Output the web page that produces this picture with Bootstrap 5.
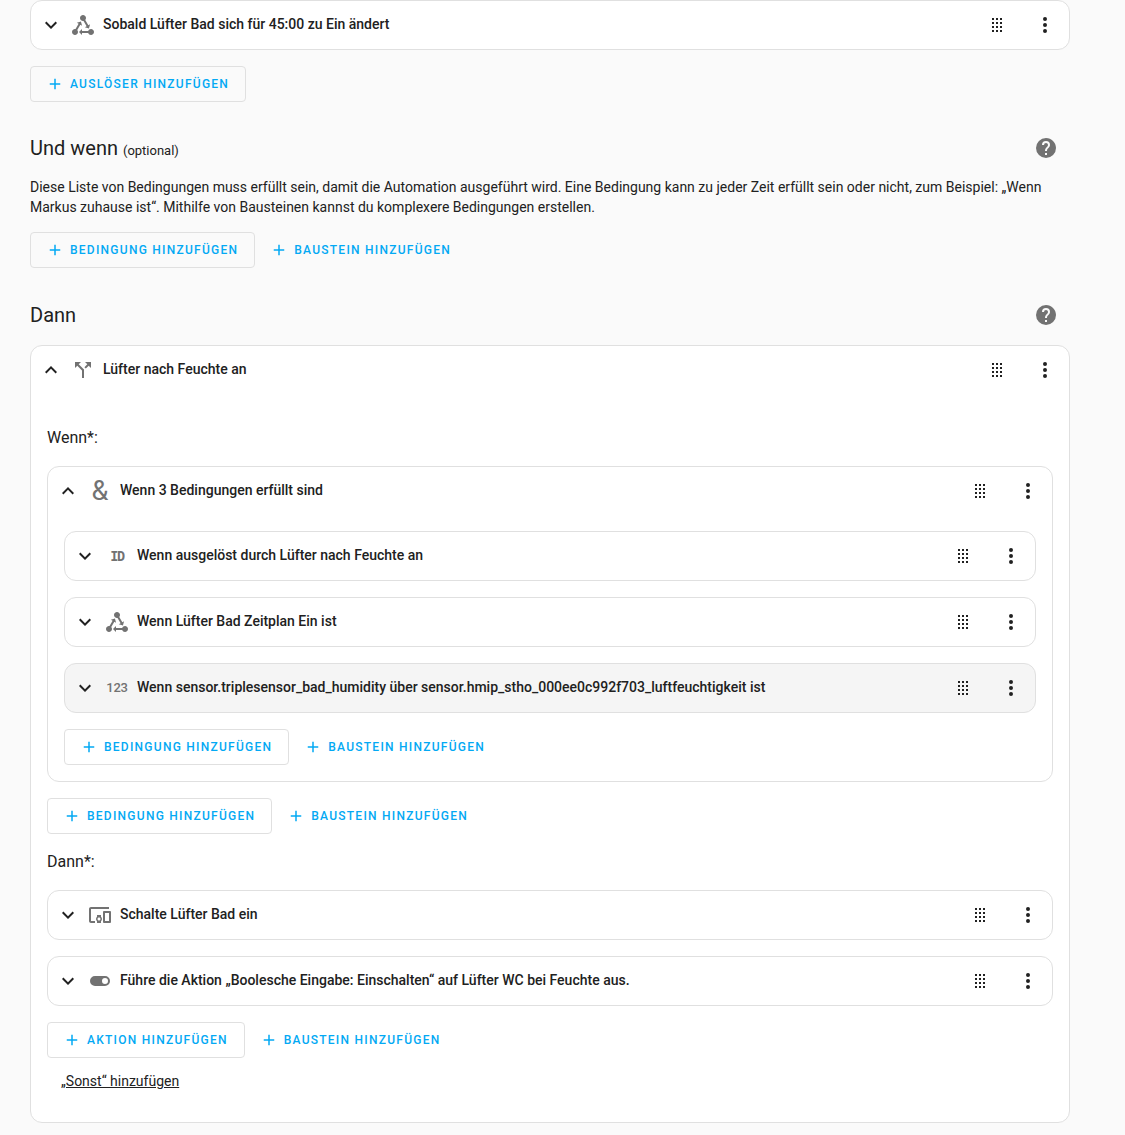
<!DOCTYPE html>
<html lang="de">
<head>
    <meta charset="UTF-8">
    <title>Automation</title>
    <link href="https://cdn.jsdelivr.net/npm/bootstrap@5.3.0/dist/css/bootstrap.min.css" rel="stylesheet">
    <style>
        body { background: #fafafa; color: #212121; font-family: Roboto, "Liberation Sans", sans-serif; font-size: 14px; line-height: 20px; }
        .page-wrap { width: 1040px; margin-left: 30px; padding-bottom: 12px; }
        svg { display: block; fill: currentColor; flex: none; }
        .sprite { display: none; }
        .row-card { background: #fff; border: 1px solid #e0e0e0; border-radius: 12px; }
        .row-card.hilite { background: #f5f5f5; }
        .row-head { height: 48px; padding: 0 12px 0 8px; }
        .row-title { font-weight: 500; padding-bottom: 3px; margin-left: 8px; }
        .row-icon { color: #727272; width: 24px; height: 24px; margin-left: 8px; display: flex; align-items: center; justify-content: center; }
        .glyph-amp { font-size: 27px; font-weight: 400; line-height: 24px; }
        .glyph-id { font-family: "DejaVu Sans Mono", monospace; font-size: 13.5px; font-weight: 700; letter-spacing: -1.4px; }
        .glyph-num { font-size: 13px; font-weight: 500; letter-spacing: -.2px; }
        .row-drag { margin-right: 24px; }
        .row-body { padding: 16px; }
        .add-btn { display: inline-flex; align-items: center; height: 36px; padding: 0 16px 0 15px; border: 1px solid transparent; border-radius: 4px; color: #03a9f4; font-size: 12px; font-weight: 500; letter-spacing: 1.25px; text-transform: uppercase; line-height: 20px; text-decoration: none; }
        .add-btn:hover { color: #03a9f4; }
        .add-btn.outlined { border-color: #e0e0e0; }
        .add-btn.plain { padding: 0 8px; border: 0; margin-left: 7px; }
        .add-btn svg { margin-right: 6px; }
        .section-title { font-size: 20px; line-height: 32px; height: 32px; font-weight: 400; margin: 0; }
        .section-title small { font-size: 13px; line-height: 1; }
        .help-ico { color: #727272; margin-right: 12px; }
        .sub-label { font-size: 16px; line-height: 24px; margin: 16px 0; }
        .sonst-link { display: block; margin: 13px 0 15px 14px; color: #212121; }
        .heading-und { margin-top: 30px; }
        .desc-text { margin: 13px 0 15px; }
        .heading-dann { margin: 31px 0 14px; }
    </style>
</head>
<body>
<svg class="sprite">
    <symbol id="i-down" viewBox="0 0 24 24"><path d="M7.41,8.58L12,13.17L16.59,8.58L18,10L12,16L6,10L7.41,8.58Z"/></symbol>
    <symbol id="i-up" viewBox="0 0 24 24"><path d="M7.41,15.41L12,10.83L16.59,15.41L18,14L12,8L6,14L7.41,15.41Z"/></symbol>
    <symbol id="i-drag" viewBox="0 0 24 24"><path d="M7,19V17H9V19H7M11,19V17H13V19H11M15,19V17H17V19H15M7,15V13H9V15H7M11,15V13H13V15H11M15,15V13H17V15H15M7,11V9H9V11H7M11,11V9H13V11H11M15,11V9H17V11H15M7,7V5H9V7H7M11,7V5H13V7H11M15,7V5H17V7H15Z"/></symbol>
    <symbol id="i-dots" viewBox="0 0 24 24"><path d="M12,16A2,2 0 0,1 14,18A2,2 0 0,1 12,20A2,2 0 0,1 10,18A2,2 0 0,1 12,16M12,10A2,2 0 0,1 14,12A2,2 0 0,1 12,14A2,2 0 0,1 10,12A2,2 0 0,1 12,10M12,4A2,2 0 0,1 14,6A2,2 0 0,1 12,8A2,2 0 0,1 10,6A2,2 0 0,1 12,4Z"/></symbol>
    <symbol id="i-plus" viewBox="0 0 24 24"><path d="M19,13H13V19H11V13H5V11H11V5H13V11H19V13Z"/></symbol>
    <symbol id="i-help" viewBox="0 0 24 24"><path d="M15.07,11.25L14.17,12.17C13.45,12.89 13,13.5 13,15H11V14.5C11,13.39 11.45,12.39 12.17,11.67L13.41,10.41C13.78,10.05 14,9.55 14,9C14,7.89 13.1,7 12,7A2,2 0 0,0 10,9H8A4,4 0 0,1 12,5A4,4 0 0,1 16,9C16,9.88 15.64,10.67 15.07,11.25M13,19H11V17H13M12,2A10,10 0 0,0 2,12A10,10 0 0,0 12,22A10,10 0 0,0 22,12C22,6.47 17.5,2 12,2Z"/></symbol>
    <symbol id="i-state" viewBox="0 0 24 24"><path d="M6.27 17.05C6.72 17.58 7 18.25 7 19C7 20.66 5.66 22 4 22S1 20.66 1 19 2.34 16 4 16C4.18 16 4.36 16 4.53 16.05L7.6 10.69L5.86 9.7L9.95 8.58L11.07 12.67L9.33 11.68L6.27 17.05M20 16C18.7 16 17.6 16.84 17.18 18H11V16L8 19L11 22V20H17.18C17.6 21.16 18.7 22 20 22C21.66 22 23 20.66 23 19S21.66 16 20 16M12 8C12.18 8 12.36 8 12.53 7.95L15.6 13.31L13.86 14.3L17.95 15.42L19.07 11.33L17.33 12.32L14.27 6.95C14.72 6.42 15 5.75 15 5C15 3.34 13.66 2 12 2S9 3.34 9 5 10.34 8 12 8Z"/></symbol>
    <symbol id="i-split" viewBox="0 0 24 24"><path d="M14,4L16.29,6.29L13.41,9.17L14.83,10.59L17.71,7.71L20,10V4M10,4H4V10L6.29,7.71L11,12.41V20H13V11.59L7.71,6.29"/></symbol>
    <symbol id="i-devices" viewBox="0 0 24 24"><path d="M3 6H21V4H3C1.9 4 1 4.9 1 6V18C1 19.1 1.9 20 3 20H7V18H3V6M13 12H9V13.78C8.39 14.33 8 15.11 8 16C8 16.89 8.39 17.67 9 18.22V20H13V18.22C13.61 17.67 14 16.88 14 16S13.61 14.33 13 13.78V12M11 17.5C10.17 17.5 9.5 16.83 9.5 16S10.17 14.5 11 14.5 12.5 15.17 12.5 16 11.83 17.5 11 17.5M22 8H16C15.5 8 15 8.5 15 9V19C15 19.5 15.5 20 16 20H22C22.5 20 23 19.5 23 19V9C23 8.5 22.5 8 22 8M21 18H17V10H21V18Z"/></symbol>
    <symbol id="i-toggle" viewBox="0 0 24 24"><path d="M17,7H7A5,5 0 0,0 2,12A5,5 0 0,0 7,17H17A5,5 0 0,0 22,12A5,5 0 0,0 17,7M17,15A3,3 0 0,1 14,12A3,3 0 0,1 17,9A3,3 0 0,1 20,12A3,3 0 0,1 17,15Z"/></symbol>
</svg>

<div class="page-wrap">

    <!-- Auslöser -->
    <div class="row-card">
        <div class="row-head d-flex align-items-center">
            <svg width="24" height="24"><use href="#i-down"/></svg>
            <span class="row-icon"><svg width="24" height="24"><use href="#i-state"/></svg></span>
            <span class="row-title flex-grow-1">Sobald Lüfter Bad sich für 45:00 zu Ein ändert</span>
            <svg class="row-drag" width="24" height="24"><use href="#i-drag"/></svg>
            <svg width="24" height="24"><use href="#i-dots"/></svg>
        </div>
    </div>
    <div class="mt-3 d-flex">
        <a class="add-btn outlined"><svg width="18" height="18"><use href="#i-plus"/></svg>Auslöser hinzufügen</a>
    </div>

    <!-- Und wenn -->
    <div class="d-flex justify-content-between align-items-center heading-und">
        <h2 class="section-title">Und wenn <small>(optional)</small></h2>
        <svg class="help-ico" width="24" height="24"><use href="#i-help"/></svg>
    </div>
    <p class="desc-text">Diese Liste von Bedingungen muss erfüllt sein, damit die Automation ausgeführt wird. Eine Bedingung kann zu jeder Zeit erfüllt sein oder nicht, zum Beispiel: „Wenn Markus zuhause ist“. Mithilfe von Bausteinen kannst du komplexere Bedingungen erstellen.</p>
    <div class="d-flex">
        <a class="add-btn outlined"><svg width="18" height="18"><use href="#i-plus"/></svg>Bedingung hinzufügen</a>
        <a class="add-btn plain"><svg width="18" height="18"><use href="#i-plus"/></svg>Baustein hinzufügen</a>
    </div>

    <!-- Dann -->
    <div class="d-flex justify-content-between align-items-center heading-dann">
        <h2 class="section-title">Dann</h2>
        <svg class="help-ico" width="24" height="24"><use href="#i-help"/></svg>
    </div>

    <div class="row-card">
        <div class="row-head d-flex align-items-center">
            <svg width="24" height="24"><use href="#i-up"/></svg>
            <span class="row-icon"><svg width="24" height="24"><use href="#i-split"/></svg></span>
            <span class="row-title flex-grow-1">Lüfter nach Feuchte an</span>
            <svg class="row-drag" width="24" height="24"><use href="#i-drag"/></svg>
            <svg width="24" height="24"><use href="#i-dots"/></svg>
        </div>
        <div class="row-body">
            <div class="sub-label">Wenn*:</div>

            <div class="row-card">
                <div class="row-head d-flex align-items-center">
                    <svg width="24" height="24"><use href="#i-up"/></svg>
                    <span class="row-icon glyph-amp">&amp;</span>
                    <span class="row-title flex-grow-1">Wenn 3 Bedingungen erfüllt sind</span>
                    <svg class="row-drag" width="24" height="24"><use href="#i-drag"/></svg>
                    <svg width="24" height="24"><use href="#i-dots"/></svg>
                </div>
                <div class="row-body d-flex flex-column gap-3">
                    <div class="row-card">
                        <div class="row-head d-flex align-items-center">
                            <svg width="24" height="24"><use href="#i-down"/></svg>
                            <span class="row-icon glyph-id">ID</span>
                            <span class="row-title flex-grow-1">Wenn ausgelöst durch Lüfter nach Feuchte an</span>
                            <svg class="row-drag" width="24" height="24"><use href="#i-drag"/></svg>
                            <svg width="24" height="24"><use href="#i-dots"/></svg>
                        </div>
                    </div>
                    <div class="row-card">
                        <div class="row-head d-flex align-items-center">
                            <svg width="24" height="24"><use href="#i-down"/></svg>
                            <span class="row-icon"><svg width="24" height="24"><use href="#i-state"/></svg></span>
                            <span class="row-title flex-grow-1">Wenn Lüfter Bad Zeitplan Ein ist</span>
                            <svg class="row-drag" width="24" height="24"><use href="#i-drag"/></svg>
                            <svg width="24" height="24"><use href="#i-dots"/></svg>
                        </div>
                    </div>
                    <div class="row-card hilite">
                        <div class="row-head d-flex align-items-center">
                            <svg width="24" height="24"><use href="#i-down"/></svg>
                            <span class="row-icon glyph-num">123</span>
                            <span class="row-title flex-grow-1">Wenn sensor.triplesensor_bad_humidity über sensor.hmip_stho_000ee0c992f703_luftfeuchtigkeit ist</span>
                            <svg class="row-drag" width="24" height="24"><use href="#i-drag"/></svg>
                            <svg width="24" height="24"><use href="#i-dots"/></svg>
                        </div>
                    </div>
                    <div class="d-flex">
                        <a class="add-btn outlined"><svg width="18" height="18"><use href="#i-plus"/></svg>Bedingung hinzufügen</a>
                        <a class="add-btn plain"><svg width="18" height="18"><use href="#i-plus"/></svg>Baustein hinzufügen</a>
                    </div>
                </div>
            </div>

            <div class="d-flex mt-3">
                <a class="add-btn outlined"><svg width="18" height="18"><use href="#i-plus"/></svg>Bedingung hinzufügen</a>
                <a class="add-btn plain"><svg width="18" height="18"><use href="#i-plus"/></svg>Baustein hinzufügen</a>
            </div>

            <div class="sub-label">Dann*:</div>

            <div class="d-flex flex-column gap-3">
                <div class="row-card">
                    <div class="row-head d-flex align-items-center">
                        <svg width="24" height="24"><use href="#i-down"/></svg>
                        <span class="row-icon"><svg width="24" height="24"><use href="#i-devices"/></svg></span>
                        <span class="row-title flex-grow-1">Schalte Lüfter Bad ein</span>
                        <svg class="row-drag" width="24" height="24"><use href="#i-drag"/></svg>
                        <svg width="24" height="24"><use href="#i-dots"/></svg>
                    </div>
                </div>
                <div class="row-card">
                    <div class="row-head d-flex align-items-center">
                        <svg width="24" height="24"><use href="#i-down"/></svg>
                        <span class="row-icon"><svg width="24" height="24"><use href="#i-toggle"/></svg></span>
                        <span class="row-title flex-grow-1">Führe die Aktion „Boolesche Eingabe: Einschalten“ auf Lüfter WC bei Feuchte aus.</span>
                        <svg class="row-drag" width="24" height="24"><use href="#i-drag"/></svg>
                        <svg width="24" height="24"><use href="#i-dots"/></svg>
                    </div>
                </div>
            </div>

            <div class="d-flex mt-3">
                <a class="add-btn outlined"><svg width="18" height="18"><use href="#i-plus"/></svg>Aktion hinzufügen</a>
                <a class="add-btn plain"><svg width="18" height="18"><use href="#i-plus"/></svg>Baustein hinzufügen</a>
            </div>

            <a href="#" class="sonst-link">„Sonst“ hinzufügen</a>
        </div>
    </div>
</div>

<script src="https://cdn.jsdelivr.net/npm/bootstrap@5.3.0/dist/js/bootstrap.bundle.min.js"></script>
</body>
</html>
